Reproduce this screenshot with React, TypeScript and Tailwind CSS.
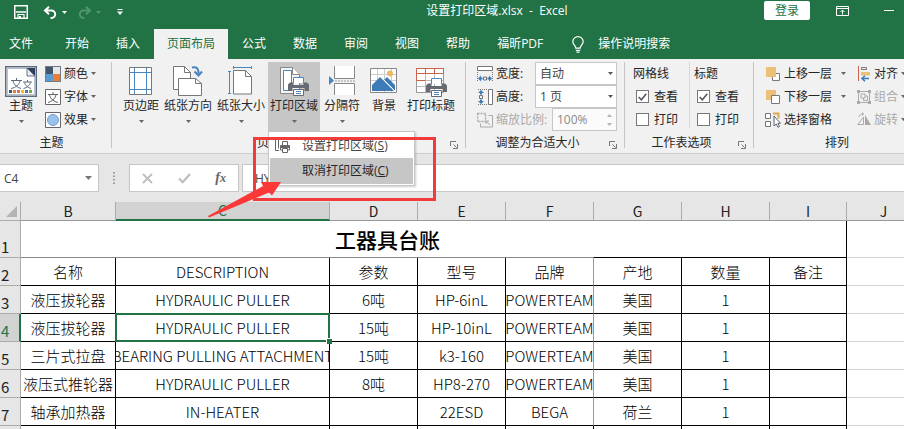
import type { ReactNode } from "react";

const TABS = ["开始", "插入", "页面布局", "公式", "数据", "审阅", "视图", "帮助", "福昕PDF"];

const COLUMNS = ["B", "C", "D", "E", "F", "G", "H", "I"];

const ROWS = [
  ["名称", "DESCRIPTION", "参数", "型号", "品牌", "产地", "数量", "备注"],
  ["液压拔轮器", "HYDRAULIC PULLER", "6吨", "HP-6inL", "POWERTEAM", "美国", "1", ""],
  ["液压拔轮器", "HYDRAULIC PULLER", "15吨", "HP-10inL", "POWERTEAM", "美国", "1", ""],
  ["三片式拉盘", "BEARING PULLING ATTACHMENT", "15吨", "k3-160", "POWERTEAM", "美国", "1", ""],
  ["液压式推轮器", "HYDRAULIC PULLER", "8吨", "HP8-270", "POWERTEAM", "美国", "1", ""],
  ["轴承加热器", "IN-HEATER", "", "22ESD", "BEGA", "荷兰", "1", ""],
];

export default function App() {
  return (
    <div className="relative flex h-screen flex-col overflow-hidden bg-[#e6e6e6] font-['Open_Sans','Noto_Sans_CJK_SC',sans-serif] text-xs text-[#262626]">
      <TitleBar />
      <TabBar />
      <Ribbon />
      <FormulaBar />
      <Sheet />
      <Callout />
    </div>
  );
}

function TitleBar() {
  return (
    <header className="flex h-[29px] shrink-0 items-start bg-[#217346] text-white">
      <div className="flex h-6 w-[230px] shrink-0 items-center pl-[14px]">
        <button aria-label="保存">
          <svg width="14" height="14" viewBox="0 0 14 14" fill="none" stroke="currentColor">
            <path d="M.75.75h12.5v12.5H.75z" strokeWidth="1.500" />
            <path d="M2 7h10" strokeWidth="1.500" />
            <path d="M4 13V9.500h6V13" strokeWidth="1.200" />
            <path d="M5 11h2v2H5z" fill="currentColor" stroke="none" />
          </svg>
        </button>
        <button aria-label="撤消" className="ml-[15px] flex items-center gap-[5px]">
          <UndoIcon />
          <Caret />
        </button>
        <button aria-label="恢复" className="ml-[11px] flex items-center gap-1 text-[#4f9570]">
          <span className="-scale-x-100">
            <UndoIcon />
          </span>
          <Caret />
        </button>
        <button aria-label="自定义快速访问工具栏" className="ml-4">
          <svg width="6" height="6" viewBox="0 0 6 6" fill="currentColor">
            <path d="M.5 0h5v1h-5zM0 2.500h6L3 6z" />
          </svg>
        </button>
      </div>
      <h1 className="flex-1 text-center leading-[22px] whitespace-pre">设置打印区域.xlsx  -  Excel</h1>
      <div className="flex w-[140px] shrink-0 items-center pt-px">
        <button className="h-[19px] w-[46px] rounded-xs bg-white leading-[18px] text-[#217346]">登录</button>
        <button aria-label="功能区显示选项" className="ml-[26px]">
          <svg width="13" height="10" viewBox="0 0 13 10" fill="none" stroke="currentColor">
            <path d="M.5.5h12v9H.5zM.5 2.500h12M6.500 8.500v-4M4.500 6l2-2 2 2" />
          </svg>
        </button>
        <button aria-label="最小化" className="ml-[35px]">
          <svg width="10" height="1" viewBox="0 0 10 1" fill="currentColor">
            <path d="M0 0h10v1H0z" />
          </svg>
        </button>
      </div>
    </header>
  );
}

function TabBar() {
  return (
    <nav className="flex h-[30px] shrink-0 gap-px bg-[#217346] leading-7 text-white">
      <button className="w-[51px] pl-[9px] text-left">文件</button>
      {TABS.map((tab) => (
        <button
          key={tab}
          className={tab === "页面布局" ? "bg-[#f1f1f1] px-[13px] text-[#217346]" : "px-[13px]"}
        >
          {tab}
        </button>
      ))}
      <button className="flex items-center gap-[14px] px-[15px]">
        <svg width="12" height="17" viewBox="0 0 12 17" fill="none" stroke="currentColor" strokeWidth="1.200">
          <path d="M3.800 12.200C3.800 9.500.8 8.700.8 5.600a5.200 5 0 0 1 10.400 0c0 3.100-3 3.900-3 6.600zM3.800 14.300h4.400M4.500 16.200h3" />
        </svg>
        操作说明搜索
      </button>
    </nav>
  );
}

function Ribbon() {
  return (
    <div className="relative z-10 flex h-[95px] shrink-0 border-b border-[#cdcdcd] bg-[#f1f1f1] leading-4">
      <Group label="主题" className="w-[112px]" labelClass="pr-2">
        <BigButton label="主题" icon={<ThemeIcon />} caret className="ml-px w-10" />
        <div className="ml-1">
          <SmallButton label="颜色" icon={<ColorsIcon />} caret />
          <SmallButton label="字体" icon={<FontsIcon />} caret />
          <SmallButton label="效果" icon={<EffectsIcon />} caret />
        </div>
      </Group>

      <Group label="页面设置" className="w-[354px]" launcher>
        <div className="ml-[9px] flex gap-px">
          <BigButton label="页边距" icon={<MarginsIcon />} caret className="w-10" />
          <BigButton label="纸张方向" icon={<OrientationIcon />} caret className="w-[52px]" />
          <BigButton label="纸张大小" icon={<SizeIcon />} caret className="w-[52px]" />
          <div className="relative">
            <BigButton label="打印区域" icon={<PrintAreaIcon />} caret className="w-[52px] bg-[#c6c6c6]" />
            <PrintAreaMenu />
          </div>
          <BigButton label="分隔符" icon={<BreaksIcon />} caret className="w-[42px]" />
          <BigButton label="背景" icon={<BackgroundIcon />} className="w-10" />
          <BigButton label="打印标题" icon={<PrintTitlesIcon />} className="w-[52px]" />
        </div>
      </Group>

      <Group label="调整为合适大小" className="w-[159px]" launcher>
        <div className="ml-[11px]">
          <ScaleRow id="fit-width" label="宽度:" icon={<FitWidthIcon />}>
            <ScaleSelect id="fit-width" value="自动" />
          </ScaleRow>
          <ScaleRow id="fit-height" label="高度:" icon={<FitHeightIcon />}>
            <ScaleSelect id="fit-height" value="1 页" />
          </ScaleRow>
          <ScaleRow id="fit-scale" label="缩放比例:" icon={<ScaleIcon />} disabled>
            <div className="relative">
              <input
                id="fit-scale"
                disabled
                defaultValue="100%"
                className="block h-[23px] w-[65px] border border-[#c6c6c6] bg-[#fbfbfb] px-1 text-[#8a8a8a]"
              />
              <svg className="absolute top-[6px] right-[5px]" width="5" height="12" viewBox="0 0 5 12" fill="#b5b5b5">
                <path d="M0 3h5L2.500 0zM0 9h5l-2.500 3z" />
              </svg>
            </div>
          </ScaleRow>
        </div>
      </Group>

      <Group label="工作表选项" className="w-[129px]" launcher>
        <OptionColumn id="grid" title="网格线" className="w-[64px] pl-2" />
        <div className="h-[66px] w-px bg-[#d8d8d8]" />
        <OptionColumn id="head" title="标题" className="pl-1" />
      </Group>

      <Group label="排列" className="min-w-[167px] flex-1" labelClass="max-w-[166px]" last>
        <div className="ml-[11px] w-[92px] shrink-0">
          <SmallButton label="上移一层" icon={<ForwardIcon />} caret caretClass="ml-[9px]" />
          <SmallButton label="下移一层" icon={<BackwardIcon />} caret caretClass="ml-[9px]" />
          <SmallButton label="选择窗格" icon={<SelectionIcon />} />
        </div>
        <div className="shrink-0">
          <SmallButton label="对齐" icon={<AlignIcon />} caret />
          <SmallButton label="组合" icon={<GroupIcon />} caret disabled />
          <SmallButton label="旋转" icon={<RotateIcon />} caret disabled />
        </div>
      </Group>
    </div>
  );
}

type GroupProps = {
  label: string;
  className: string;
  labelClass?: string;
  launcher?: boolean;
  last?: boolean;
  children: ReactNode;
};

function Group({ label, className, labelClass = "", launcher, last, children }: GroupProps) {
  return (
    <section className={`flex shrink-0 pt-[3px] ${className}`}>
      <div className="flex min-w-0 flex-1 flex-col">
        <div className="flex h-[70px]">{children}</div>
        <div className="flex items-center pt-[3px]">
          <span className={`flex-1 text-center ${labelClass}`}>{label}</span>
          {launcher && (
            <button aria-label={`${label}设置`} className="mt-1 w-[15px] text-[#777]">
              <svg width="8" height="8" viewBox="0 0 8 8" fill="none" stroke="currentColor">
                <path d="M.5 5V.5H6M3.500 3.500l3 3M7.500 3v4.500H3" />
              </svg>
            </button>
          )}
        </div>
      </div>
      {!last && <div className="h-[86px] w-px bg-[#c4c4c4]" />}
    </section>
  );
}

function Caret({ className = "" }: { className?: string }) {
  return (
    <svg className={`shrink-0 ${className}`} width="5" height="3" viewBox="0 0 5 3" fill="currentColor">
      <path d="M0 0h5L2.500 3z" />
    </svg>
  );
}

type BigButtonProps = { label: string; icon: ReactNode; caret?: boolean; className: string };

function BigButton({ label, icon, caret, className }: BigButtonProps) {
  return (
    <button className={`flex h-[70px] flex-col items-center pt-1 whitespace-nowrap ${className}`}>
      {icon}
      <span className="mt-px">{label}</span>
      {caret && <Caret className="mt-[6px] text-[#666]" />}
    </button>
  );
}

type SmallButtonProps = {
  label: string;
  icon: ReactNode;
  caret?: boolean;
  caretClass?: string;
  disabled?: boolean;
};

function SmallButton({ label, icon, caret, caretClass = "ml-[3px]", disabled }: SmallButtonProps) {
  return (
    <button
      disabled={disabled}
      className="flex h-[23px] items-center whitespace-nowrap disabled:text-[#aaa]"
    >
      {icon}
      <span className="ml-[3px]">{label}</span>
      {caret && <Caret className={`${caretClass} text-[#666]`} />}
    </button>
  );
}

type ScaleRowProps = { id: string; label: string; icon: ReactNode; disabled?: boolean; children: ReactNode };

function ScaleRow({ id, label, icon, disabled, children }: ScaleRowProps) {
  return (
    <div className="flex h-[23px] w-[140px] items-center justify-between">
      <label htmlFor={id} className={disabled ? "flex items-center gap-[3px] text-[#aaa]" : "flex items-center gap-[3px]"}>
        {icon}
        {label}
      </label>
      {children}
    </div>
  );
}

function ScaleSelect({ id, value }: { id: string; value: string }) {
  return (
    <div className="relative">
      <select
        id={id}
        defaultValue={value}
        className="block h-[23px] w-[82px] appearance-none border border-[#c6c6c6] bg-white px-1 text-[#444]"
      >
        <option>{value}</option>
      </select>
      <Caret className="pointer-events-none absolute top-[10px] right-1 text-[#555]" />
    </div>
  );
}

function OptionColumn({ id, title, className }: { id: string; title: string; className: string }) {
  return (
    <div className={className}>
      <div className="flex h-[23px] items-center">{title}</div>
      <CheckRow id={`${id}-view`} label="查看" checked />
      <CheckRow id={`${id}-print`} label="打印" />
    </div>
  );
}

function CheckRow({ id, label, checked }: { id: string; label: string; checked?: boolean }) {
  return (
    <div className="relative flex h-[23px] items-center gap-[5px] pl-[3px]">
      <input
        id={id}
        type="checkbox"
        defaultChecked={checked}
        className="peer size-[13px] appearance-none border border-[#777] bg-white"
      />
      <svg
        className="pointer-events-none absolute left-[5px] hidden peer-checked:block"
        width="9"
        height="8"
        viewBox="0 0 9 8"
        fill="none"
        stroke="#555"
        strokeWidth="1.500"
      >
        <path d="M.7 4l2.600 2.800L8.300.8" />
      </svg>
      <label htmlFor={id}>{label}</label>
    </div>
  );
}

function PrintAreaMenu() {
  return (
    <div
      role="menu"
      className="absolute top-[69px] left-0 w-[147px] border border-[#c6c6c6] bg-white p-px shadow-[1px_1px_2px_rgba(0,0,0,0.2)]"
    >
      <button role="menuitem" className="flex h-[25px] w-full items-center pl-1 text-[#444]">
        <svg width="18" height="16" viewBox="0 0 18 16" fill="none" stroke="#666">
          <path d="M5 1.500H1.500v11H5M4.500 1.500v9M8.500 7V3.500h5V7M8.500 12h-2V7.500h9V12h-2M8.500 10.500h5v4h-5z" />
          <path d="M6.500 8h9v2h-9z" fill="#666" stroke="none" />
        </svg>
        <span className="ml-[10px]">
          设置打印区域(<u>S</u>)
        </span>
      </button>
      <button role="menuitem" className="flex h-[26px] w-full items-center bg-[#c6c6c6] pl-8">
        <span>
          取消打印区域(<u>C</u>)
        </span>
      </button>
    </div>
  );
}

function FormulaBar() {
  return (
    <div className="flex h-12 shrink-0 items-start pt-[10px] text-[#444]">
      <div className="relative">
        <input
          aria-label="名称框"
          defaultValue="C4"
          className="block h-7 w-[99px] border border-l-0 border-[#c6c6c6] bg-white pl-1"
        />
        <svg className="absolute top-3 right-[7px]" width="7" height="4" viewBox="0 0 7 4" fill="#777">
          <path d="M0 0h7L3.500 4z" />
        </svg>
      </div>
      <svg className="mt-2 ml-[14px]" width="2" height="12" viewBox="0 0 2 12" fill="#999">
        <path d="M0 0h2v1.500H0zM0 3.500h2V5H0zM0 7h2v1.500H0zM0 10.500h2V12H0z" />
      </svg>
      <div className="ml-[14px] flex h-7 w-[110px] shrink-0 items-center justify-between border border-[#c6c6c6] bg-white px-3">
        <button aria-label="取消">
          <svg width="11" height="11" viewBox="0 0 11 11" fill="none" stroke="#bdbdbd" strokeWidth="1.800">
            <path d="M1 1l9 9M10 1l-9 9" />
          </svg>
        </button>
        <button aria-label="输入">
          <svg width="13" height="11" viewBox="0 0 13 11" fill="none" stroke="#bdbdbd" strokeWidth="2.200">
            <path d="M1 5.500l3.700 3.700L12 1" />
          </svg>
        </button>
        <button
          aria-label="插入函数"
          className="font-['Liberation_Serif',serif] text-sm leading-4 font-bold text-[#666] italic"
        >
          f<span className="text-xs">x</span>
        </button>
      </div>
      <input
        aria-label="编辑栏"
        defaultValue="HYDRAULIC PULLER"
        className="ml-[3px] h-7 min-w-0 flex-1 border border-r-0 border-[#c6c6c6] bg-white pl-3"
      />
    </div>
  );
}

function Sheet() {
  return (
    <div className="flex-1 overflow-hidden bg-white">
      <table className="w-full min-w-[920px] table-fixed border-separate border-spacing-0 text-[15px] leading-5 font-light text-black font-['Noto_Sans_CJK_SC',sans-serif]">
        <colgroup>
          <col className="w-[21px]" />
          <col className="w-[95px]" />
          <col className="w-[214px]" />
          <col className="w-[88px]" />
          <col className="w-[88px]" />
          <col className="w-[88px]" />
          <col className="w-[88px]" />
          <col className="w-[88px]" />
          <col className="w-[77px]" />
          <col />
        </colgroup>
        <thead>
          <tr className="h-[19px] bg-[#e6e6e6] text-sm leading-[17px]">
            <th aria-label="全选" className="border-r border-b border-[#ababab] p-0 pl-[6px]">
              <svg width="11" height="11" viewBox="0 0 11 11" fill="#b4b4b4">
                <path d="M11 0v11H0z" />
              </svg>
            </th>
            {COLUMNS.map((col) => (
              <th
                key={col}
                className={
                  col === "C"
                    ? "border-r border-b-2 border-r-[#ababab] border-b-[#217346] bg-[#d2d2d2] p-0 font-normal text-[#217346]"
                    : "border-r border-b border-r-[#ababab] border-b-[#999] p-0 font-normal text-[#222]"
                }
              >
                {col}
              </th>
            ))}
            <th className="border-b border-[#999] p-0 font-normal text-[#222]">J</th>
          </tr>
        </thead>
        <tbody>
          <tr className="h-[37px]">
            <RowHeader n={1} />
            <td colSpan={5} className="border-b border-[#888] p-0 pl-[160px] text-center text-[21px] font-medium">
              工器具台账
            </td>
            <td colSpan={3} className="border-r border-b border-black p-0" />
            <td className="border-b border-[#d4d4d4] p-0" />
          </tr>
          {ROWS.map((row, r) => (
            <tr key={r} className="h-7">
              <RowHeader n={r + 2} active={r === 2} />
              {row.map((text, c) => (
                <td
                  key={c}
                  className={
                    c === 4
                      ? "relative border-r border-b border-r-[#999] border-b-black p-0"
                      : "relative border-r border-b border-black p-0"
                  }
                >
                  <div className="flex justify-center overflow-hidden whitespace-nowrap">{text}</div>
                  {r === 2 && c === 1 && (
                    <span className="absolute -inset-x-px -top-px -bottom-px z-10 border-2 border-[#217346]">
                      <span className="absolute -right-1 -bottom-1 size-[6px] border-t border-l border-white bg-[#217346]" />
                    </span>
                  )}
                </td>
              ))}
              <td className="border-b border-[#d4d4d4] p-0" />
            </tr>
          ))}
          <tr className="h-7">
            <td className="border-r border-b border-[#ababab] bg-[#e6e6e6] p-0" />
            {COLUMNS.map((col) => (
              <td key={col} className="border-r border-b border-black p-0" />
            ))}
            <td className="border-b border-[#d4d4d4] p-0" />
          </tr>
        </tbody>
      </table>
    </div>
  );
}

function RowHeader({ n, active }: { n: number; active?: boolean }) {
  return (
    <th
      className={
        active
          ? "border-r-2 border-b border-r-[#217346] border-b-[#ababab] bg-[#d2d2d2] p-0 pl-px text-left align-bottom font-normal text-[#217346]"
          : "border-r border-b border-[#ababab] bg-[#e6e6e6] p-0 pl-px text-left align-bottom font-normal text-[#222]"
      }
    >
      {n}
    </th>
  );
}

// red frame and arrow pointing at the menu entry
function Callout() {
  return (
    <div className="pointer-events-none absolute top-[137px] left-[253px] z-20 h-16 w-[183px] border-3 border-[#f23b3b]">
      <svg className="absolute top-[41px] -left-12" width="74" height="38" viewBox="0 0 74 38" fill="#fb3838">
        <path d="M0 35L55 5 53 1 73 1 64 14.500 61 11.500 1 36.500z" />
      </svg>
    </div>
  );
}

function UndoIcon() {
  return (
    <svg width="14" height="13" viewBox="0 0 14 13" fill="none" stroke="currentColor" strokeWidth="2">
      <path d="M1.500 4.500h7a3.700 3.700 0 0 1 0 7.400H7.500M6 .8L2 4.500 6 8.200" />
    </svg>
  );
}

function ThemeIcon() {
  return (
    <svg width="32" height="31" viewBox="0 0 32 31" fill="none">
      <path d="M.75.75h30.500v29.500H.75z" fill="#fff" stroke="#5b6b80" strokeWidth="1.500" />
      <path d="M2.500 2.500H22l7.500 7v19h-27z" stroke="#b7c0cc" />
      <path d="M22 2h8v8z" fill="#2f4058" />
      <path d="M22 2v8h8z" fill="#e8edf3" stroke="#44546a" strokeWidth=".8" />
      <path d="M6 14.500h11M11.500 12v2.500M8 15c1 4 4 6.500 8 7.500M15 15c-1 4-4 6.500-9 7.500M18 16h9M22.500 14v2M19.500 16.500c1 3 3 5 6.500 6M25.500 16.500c-1 3-3 5-7 6" stroke="#5b6b80" />
      <path d="M4 24h3v3H4z" fill="#44546a" />
      <path d="M8 24h3v3H8z" fill="#ed7d31" />
      <path d="M12 24h3v3h-3z" fill="#e06a5a" />
      <path d="M16 24h3v3h-3z" fill="#ffc000" />
      <path d="M20 24h3v3h-3z" fill="#5b6bc0" />
      <path d="M24 24h3v3h-3z" fill="#70ad47" />
    </svg>
  );
}

function ColorsIcon() {
  return (
    <svg width="16" height="16" viewBox="0 0 16 16">
      <path d="M0 0h16v16H0z" fill="#6f7b8a" />
      <path d="M1 1h7v7H1z" fill="#44546a" />
      <path d="M8 1h7v7H8z" fill="#e7e6e6" />
      <path d="M1 8h7v7H1z" fill="#5b9bd5" />
      <path d="M8 8h7v7H8z" fill="#ed7d31" />
    </svg>
  );
}

function FontsIcon() {
  return (
    <svg width="16" height="16" viewBox="0 0 16 16" fill="none" stroke="#666">
      <path d="M.5.5h15v15H.5z" fill="#fff" />
      <path d="M3 5.500h10M8 3v2.500M4.500 6c1 4 4 6.500 8.500 7.500M11 6c-1 4-4 6.500-8 7.500" />
    </svg>
  );
}

function EffectsIcon() {
  return (
    <svg width="16" height="16" viewBox="0 0 16 16">
      <path d="M.5.5h15v15H.5z" fill="#fff" stroke="#666" />
      <circle cx="8" cy="8" r="5.500" fill="#9cc2ea" stroke="#6f9fd4" />
    </svg>
  );
}

function MarginsIcon() {
  return (
    <svg width="24" height="31" viewBox="0 0 24 31" fill="none">
      <path d="M.5 1.500h22v27H.5z" fill="#fff" stroke="#777" />
      <path d="M5.500 2v26M17.500 2v26M1 6.500h21M1 23.500h21" stroke="#4a86c0" />
    </svg>
  );
}

function OrientationIcon() {
  return (
    <svg width="30" height="31" viewBox="0 0 30 31" fill="none" stroke="#777">
      <path d="M.5 23.500V.5h11l6 6v17z" fill="#fff" />
      <path d="M11.500.5v6h6" />
      <path d="M5.500 12.500h17l6 5v12h-23z" fill="#fff" />
      <path d="M22.500 12.500v5h6" />
      <path d="M19 1.500c5-1 6.500 1 6.500 6M21.500 5.500l4 4 3.500-4" stroke="#4a86c0" strokeWidth="2" />
    </svg>
  );
}

function SizeIcon() {
  return (
    <svg width="26" height="31" viewBox="0 0 26 31" fill="none">
      <path d="M5.500 4.500h12l6 6v17.500h-18z" fill="#fff" stroke="#777" />
      <path d="M17.500 4.500v6h6" stroke="#777" />
      <path d="M5 1.500h19M5.500 0v3M23.500 0v3M1.500 5v23M0 5.500h3M0 27.500h3" stroke="#4a86c0" />
    </svg>
  );
}

function Printer() {
  return (
    <>
      <path d="M5.500 6V.5h10V6" fill="#fff" stroke="#4a86c0" />
      <path d="M2 5.500h3.500V8h10V5.500H19l2 2v6.500h-4.500v-3h-12v3H0V7.500z" fill="#666b73" />
      <path d="M5.500 12.500h10v6h-10z" fill="#fff" stroke="#666b73" />
      <path d="M8 14.500h5M8 16.500h5" stroke="#4a86c0" />
    </>
  );
}

function PrintAreaIcon() {
  return (
    <svg width="31" height="31" viewBox="0 0 31 31" fill="none">
      <path d="M1.500 1.500h12l7 7v19h-19z" fill="#f5f5f5" stroke="#888" />
      <path d="M4.500 4.500h8v20h-8z" fill="#fff" stroke="#4a86c0" />
      <path d="M13.500 1.500v7h7" fill="#fff" stroke="#888" />
      <g transform="translate(9 11)">
        <Printer />
      </g>
    </svg>
  );
}

function BreaksIcon() {
  return (
    <svg width="27" height="31" viewBox="0 0 27 31" fill="none">
      <path d="M5.500 0h20v12.500h-20zM5.500 17.500h20V29h-20z" fill="#fff" />
      <path d="M5.500 0v12.500h20V0M5.500 29V17.500h20V29" stroke="#888" />
      <path d="M6 15h20" stroke="#999" strokeDasharray="2 1" />
      <path d="M0 10l5 4.500L0 19z" fill="#4a86c0" />
    </svg>
  );
}

function BackgroundIcon() {
  return (
    <svg width="28" height="31" viewBox="0 0 28 31" fill="none">
      <path d="M.5 2.500h26v24H.5z" fill="#fff" stroke="#888" />
      <path d="M7.500 3v23M14.500 3v23M21.500 3v23M1 8.500h25M1 14.500h25" stroke="#ccc" />
      <circle cx="20" cy="7.500" r="3" fill="#edb867" />
      <path d="M2 25V19l8-8 14 14z" fill="#3d7ab8" />
      <path d="M14 14l3-3 8 8v6z" fill="#3d7ab8" />
      <path d="M13 13l12 12" stroke="#fff" />
    </svg>
  );
}

function PrintTitlesIcon() {
  return (
    <svg width="31" height="31" viewBox="0 0 31 31" fill="none">
      <path d="M.5 2.500h27v24H.5z" fill="#fff" stroke="#999" />
      <path d="M1 14.500h26M1 20.500h26M9.500 8v18M18.500 8v18" stroke="#bbb" />
      <path d="M.5 7.500v-5h27v5zM9.500 3v5M18.500 3v5M.5 7.500v7h9" stroke="#c8644a" />
      <g transform="translate(10 12)">
        <Printer />
      </g>
    </svg>
  );
}

function FitWidthIcon() {
  return (
    <svg width="16" height="16" viewBox="0 0 16 16" fill="none">
      <path d="M.5.5h15v4H.5z" fill="#fff" stroke="#777" />
      <path d="M.5 6v9M15.500 6v9" stroke="#777" strokeDasharray="1 1" />
      <path d="M6.500 11h3v3h-3z" stroke="#777" />
      <path d="M1 12.500l3-3v2h1.500v2H4v2zM15 12.500l-3-3v2h-1.500v2H12v2z" fill="#3d7ab8" />
    </svg>
  );
}

function FitHeightIcon() {
  return (
    <svg width="16" height="16" viewBox="0 0 16 16" fill="none">
      <path d="M11.500.5h4v15h-4z" fill="#fff" stroke="#777" />
      <path d="M1 .5h9M1 15.500h9" stroke="#777" strokeDasharray="1 1" />
      <path d="M2.500 6.500h3v3h-3z" stroke="#777" />
      <path d="M4 1l3 3H5v1.500H3V4H1zM4 15l3-3H5v-1.500H3V12H1z" fill="#3d7ab8" />
    </svg>
  );
}

function ScaleIcon() {
  return (
    <svg width="16" height="16" viewBox="0 0 16 16" fill="none" stroke="#aaa">
      <path d="M3.500 11.500v3.500h12V3.500h-4" />
      <path d="M.5 1.500h8v8h-8z" strokeDasharray="2 1" strokeWidth="1.500" />
      <path d="M13 13L9 9M9 12V9h3" />
    </svg>
  );
}

function ForwardIcon() {
  return (
    <svg width="16" height="16" viewBox="0 0 16 16" fill="none">
      <path d="M7.500 7.500h7v7h-7z" fill="#fff" stroke="#777" />
      <path d="M1 1h10v10H1z" fill="#edc07a" />
    </svg>
  );
}

function BackwardIcon() {
  return (
    <svg width="16" height="16" viewBox="0 0 16 16" fill="none">
      <path d="M1 1h10v10H1z" fill="#edc07a" />
      <path d="M6.500 6.500h8v8h-8z" fill="#fff" stroke="#777" />
    </svg>
  );
}

function SelectionIcon() {
  return (
    <svg width="16" height="16" viewBox="0 0 16 16" fill="none" stroke="#777">
      <path d="M.5 1.500h5v5h-5zM.5 9.500h5v5h-5z" fill="#fff" />
      <path d="M8 1.500h5.500v5" stroke="#e0a84e" strokeWidth="2" />
      <path d="M9 4v10l2.300-2 1.700 3.300 1.500-.8-1.600-3.200h2.600z" fill="#fff" stroke="#5a6472" />
    </svg>
  );
}

function AlignIcon() {
  return (
    <svg width="14" height="16" viewBox="0 0 14 16" fill="none">
      <path d="M1.500 0v15" stroke="#c8644a" />
      <path d="M4.500 1.500h5v2h-5z" stroke="#777" />
      <path d="M4 6h9v3.500H4z" fill="#edc07a" />
      <path d="M12 12.500H5M8 9.800l-3 2.700 3 2.700" stroke="#3d7ab8" strokeWidth="1.500" />
    </svg>
  );
}

function GroupIcon() {
  return (
    <svg width="14" height="16" viewBox="0 0 14 16" fill="none" stroke="#aaa">
      <path d="M1.500 2.500h11v11h-11zM4 5h4v4H4zM6.500 9v2.500h4V7H8" />
      <path d="M0 1h3v3H0zM11 1h3v3h-3zM0 12h3v3H0zM11 12h3v3h-3z" fill="#aaa" stroke="none" />
    </svg>
  );
}

function RotateIcon() {
  return (
    <svg width="14" height="16" viewBox="0 0 14 16" fill="none">
      <path d="M8 3v10h6z" fill="#aaa" />
      <path d="M6.500 5v7.500H.8zM2 5c0-2 1.500-3 4-3M5 .5L6.800 2 5 3.700" stroke="#aaa" />
    </svg>
  );
}
